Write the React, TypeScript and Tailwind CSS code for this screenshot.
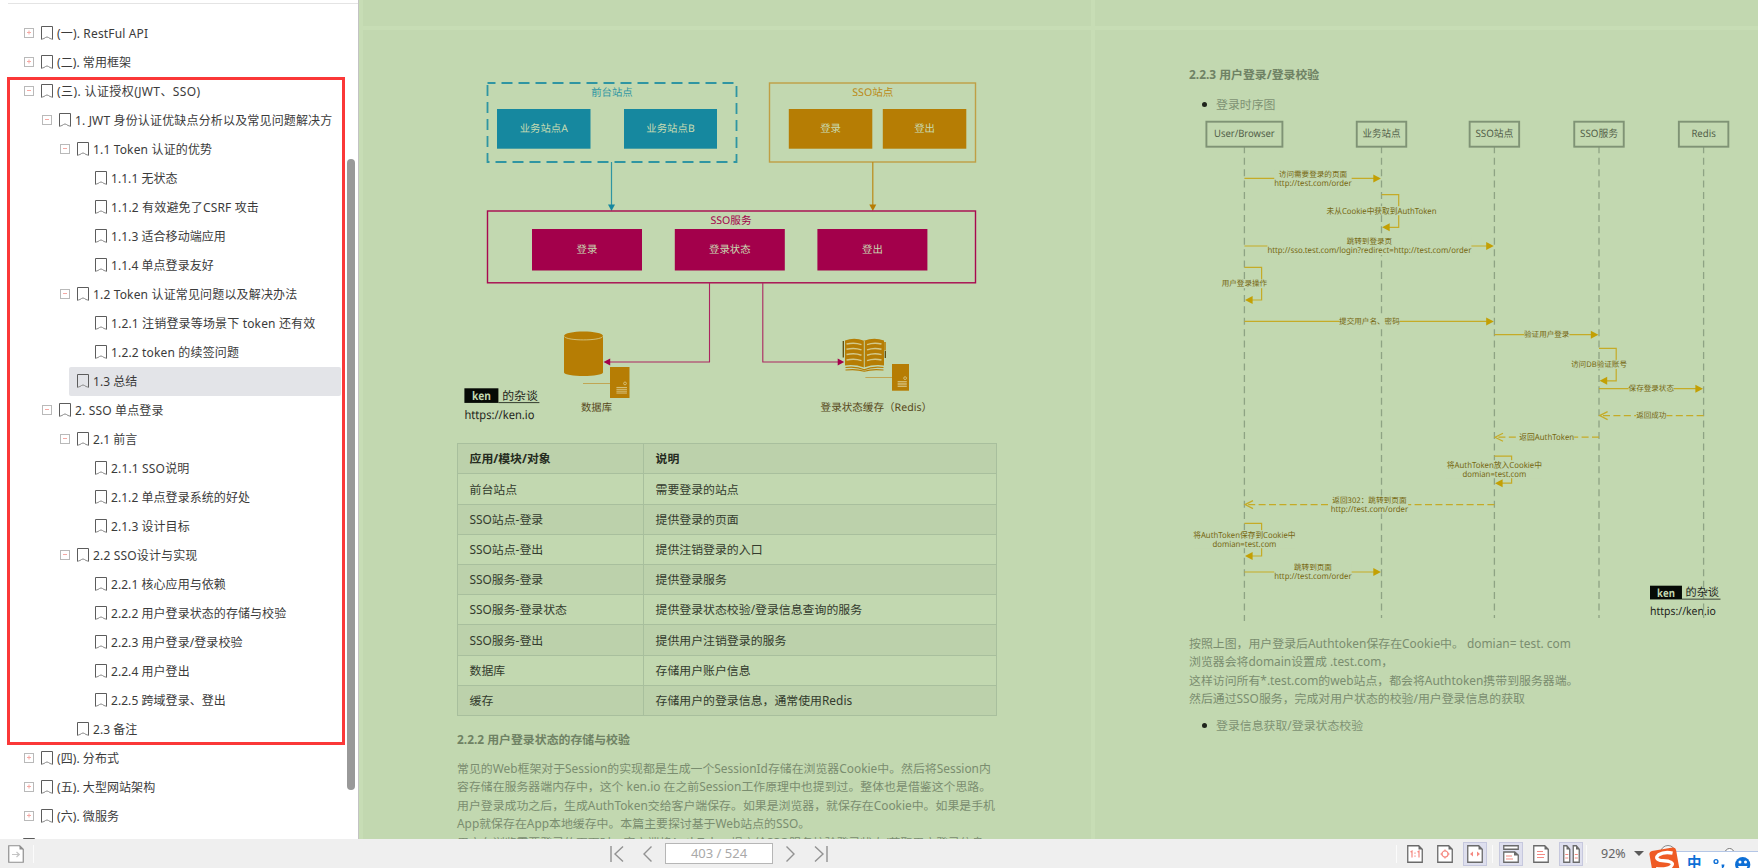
import { Fragment } from 'react'
import type { ReactNode } from 'react'

const PAPER = '#c2d8b0'
const TEAL = '#16889f'
const GOLD = '#b67d04'
const WINE = '#a3004b'
const MSG = '#c3a004'

type Node = { level: number; text: string; state?: '+' | '-'; selected?: boolean }

const outline: Node[] = [
  { level: 0, text: '(一). RestFul API', state: '+' },
  { level: 0, text: '(二). 常用框架', state: '+' },
  { level: 0, text: '(三). 认证授权(JWT、SSO)', state: '-' },
  { level: 1, text: '1. JWT 身份认证优缺点分析以及常见问题解决方', state: '-' },
  { level: 2, text: '1.1 Token 认证的优势', state: '-' },
  { level: 3, text: '1.1.1 无状态' },
  { level: 3, text: '1.1.2 有效避免了CSRF 攻击' },
  { level: 3, text: '1.1.3 适合移动端应用' },
  { level: 3, text: '1.1.4 单点登录友好' },
  { level: 2, text: '1.2 Token 认证常见问题以及解决办法', state: '-' },
  { level: 3, text: '1.2.1 注销登录等场景下 token 还有效' },
  { level: 3, text: '1.2.2 token 的续签问题' },
  { level: 2, text: '1.3 总结', selected: true },
  { level: 1, text: '2. SSO 单点登录', state: '-' },
  { level: 2, text: '2.1 前言', state: '-' },
  { level: 3, text: '2.1.1 SSO说明' },
  { level: 3, text: '2.1.2 单点登录系统的好处' },
  { level: 3, text: '2.1.3 设计目标' },
  { level: 2, text: '2.2 SSO设计与实现', state: '-' },
  { level: 3, text: '2.2.1 核心应用与依赖' },
  { level: 3, text: '2.2.2 用户登录状态的存储与校验' },
  { level: 3, text: '2.2.3 用户登录/登录校验' },
  { level: 3, text: '2.2.4 用户登出' },
  { level: 3, text: '2.2.5 跨域登录、登出' },
  { level: 2, text: '2.3 备注' },
  { level: 0, text: '(四). 分布式', state: '+' },
  { level: 0, text: '(五). 大型网站架构', state: '+' },
  { level: 0, text: '(六). 微服务', state: '+' },
]

const indent = ['pl-[17px]', 'pl-[35px]', 'pl-[53px]', 'pl-[71px]']

// titles with latin words run slightly wider than the pure chinese ones
function tracking(text: string) {
  if (text.includes('、S')) return 'tracking-[0.4px]'
  return /[A-Za-z]/.test(text) ? 'tracking-[0.16px]' : 'tracking-[0.06px]'
}

const modules = [
  ['应用/模块/对象', '说明'],
  ['前台站点', '需要登录的站点'],
  ['SSO站点-登录', '提供登录的页面'],
  ['SSO站点-登出', '提供注销登录的入口'],
  ['SSO服务-登录', '提供登录服务'],
  ['SSO服务-登录状态', '提供登录状态校验/登录信息查询的服务'],
  ['SSO服务-登出', '提供用户注销登录的服务'],
  ['数据库', '存储用户账户信息'],
  ['缓存', '存储用户的登录信息，通常使用Redis'],
]

function Bookmark() {
  return (
    <svg width="12" height="14" viewBox="0 0 12 14" className="shrink-0" fill="none" stroke="#5c5c5c">
      <path d="M.5 13.5V.5h11v13" />
      <path d="M.5 13.3 Q3.5 12.6 4.5 11.5 Q6 10.4 7.5 11.5 Q8.5 12.6 11.5 13.3" stroke="#8a8a8a" />
    </svg>
  )
}

function Expander({ state }: { state?: '+' | '-' }) {
  if (!state) return <span className="w-[10px] shrink-0" />
  return (
    <svg width="10" height="10" viewBox="0 0 10 10" className="shrink-0" fill="none">
      <rect x=".5" y=".5" width="9" height="9" stroke="#b9b9b9" />
      <path d={state === '+' ? 'M3 4.5h4M5 2.5v4' : 'M3 4.5h4'} stroke="#f5a9a4" />
    </svg>
  )
}

function Sidebar() {
  return (
    <aside className="relative h-full w-[359px] shrink-0 overflow-hidden border-r border-[#c3c3c3] bg-white">
      <div className="mt-[3px] ml-2 h-px bg-[#e4e4e4]" />
      <ul className="mt-[15px] ml-[7px] w-[334px] text-[12px] text-[#3b3b3b]">
        {outline.map((n) => (
          <li key={n.text} className={`relative flex h-[29px] items-center ${indent[n.level]}`}>
            {n.selected && <span className="absolute inset-y-0 right-0 left-[62px] rounded-xs bg-[#e3e4e8]" />}
            <span className="relative flex items-center pb-px">
              <Expander state={n.state} />
              <span className="w-[7px]" />
              <Bookmark />
              <span className={`ml-[4px] pt-[2px] whitespace-nowrap ${tracking(n.text)}`}>{n.text}</span>
            </span>
          </li>
        ))}
        <li className="ml-4 flex pt-[7px]">
          <Bookmark />
        </li>
      </ul>
      {/* hand-drawn highlight over the chapter */}
      <div className="absolute top-[77px] left-[7px] h-[668px] w-[338px] border-3 border-[#fb3838]" />
      <div className="absolute top-[159px] left-[347px] h-[631px] w-2 rounded-full bg-[#999]" />
    </aside>
  )
}

type LabelProps = { x: number; y: number; w?: number; size: number; fill: string; bold?: boolean; children: string }

// text centred on x / y, stretched to w when it is given
function Label({ x, y, w, size, fill, bold, children }: LabelProps) {
  return (
    <text
      x={w ? x - w / 2 : x}
      y={y + size * 0.37}
      textAnchor={w ? 'start' : 'middle'}
      textLength={w}
      lengthAdjust="spacingAndGlyphs"
      textRendering="geometricPrecision"
      fontSize={size}
      fill={fill}
      fontWeight={bold ? 700 : 400}
    >
      {children}
    </text>
  )
}

type BlockProps = { x: number; y: number; w: number; h: number; fill: string; children: string }

function Block({ x, y, w, h, fill, children }: BlockProps) {
  return (
    <g>
      <rect x={x} y={y} width={w} height={h} fill={fill} />
      <Label x={x + w / 2} y={y + h / 2 - 0.4} size={10.4} fill="#c9dcb2">{children}</Label>
    </g>
  )
}

function Signature({ x, y, k }: { x: number; y: number; k: number }) {
  return (
    <g transform={`translate(${x} ${y}) scale(${k})`}>
      <rect width="34" height="14.6" fill="#060a06" />
      <path d="M34 14.3h41" stroke="#232a20" strokeWidth=".9" />
      <Label x={17} y={7.4} w={19} size={11.8} fill={PAPER} bold>ken</Label>
      <Label x={55.6} y={7} w={35.6} size={11.9} fill="#1e241b">的杂谈</Label>
      <Label x={35} y={26.4} w={70} size={12} fill="#1e241b">https://ken.io</Label>
    </g>
  )
}

function Server({ x, y, w, h }: { x: number; y: number; w: number; h: number }) {
  return (
    <g>
      <rect x={x} y={y} width={w} height={h} fill={GOLD} />
      <circle cx={x + w * 0.77} cy={y + h * 0.53} r="1.4" fill="none" stroke="#d9c98a" strokeWidth=".8" />
      {[0.66, 0.72, 0.78, 0.84].map((k) => (
        <path key={k} d={`M${x + w * 0.33} ${y + h * k}h${w * 0.54}`} stroke="#d9c98a" strokeWidth=".9" />
      ))}
    </g>
  )
}

function Architecture() {
  return (
    <svg width="728" height="413" viewBox="363 30 728 413" className="block shrink-0">
      <rect x="487.5" y="83" width="249" height="79" fill="none" stroke="#2f95a2" strokeWidth="1.8" strokeDasharray="11 6" strokeDashoffset="3" />
      <Label x={612} y={92} w={41.5} size={10.4} fill="#2f95a2">前台站点</Label>
      <Block x={497} y={109} w={93.5} h={39.7} fill={TEAL}>业务站点A</Block>
      <Block x={624} y={109} w={93} h={39.7} fill={TEAL}>业务站点B</Block>

      <rect x="769.5" y="83" width="206" height="79" fill="none" stroke="#bf9f45" strokeWidth="1.4" />
      <Label x={872.8} y={92} w={41} size={10.6} fill="#bb8a17">SSO站点</Label>
      <Block x={788.8} y={109} w={83.5} h={39.7} fill={GOLD}>登录</Block>
      <Block x={882.8} y={109} w={83.5} h={39.7} fill={GOLD}>登出</Block>

      <path d="M611.5 162v43" stroke="#2f95a2" strokeWidth="1.2" />
      <path d="M608 204.5h7l-3.5 6.5z" fill={TEAL} />
      <path d="M872.8 162v43" stroke="#bb8a17" strokeWidth="1.2" />
      <path d="M869.3 204.5h7l-3.5 6.5z" fill={GOLD} />

      <rect x="487.5" y="211" width="488" height="71.8" fill="none" stroke="#a8084f" strokeWidth="1.4" />
      <Label x={731} y={220.3} w={41} size={10.6} fill={WINE}>SSO服务</Label>
      <Block x={532} y={229} w={110} h={41.5} fill={WINE}>登录</Block>
      <Block x={674.8} y={229} w={110} h={41.5} fill={WINE}>登录状态</Block>
      <Block x={817.4} y={229} w={110} h={41.5} fill={WINE}>登出</Block>

      <g fill="none" stroke="#ab2560" strokeWidth="1.1">
        <path d="M709.5 283v79H610" />
        <path d="M762.8 283v79H838" />
      </g>
      <path d="M603.5 362l6.7-3.4v6.8zM844.2 362l-6.5-3.4v6.8z" fill={WINE} />

      <path d="M564 336v36.5c0 4.6 39 4.6 39 0V336c0-6-39-6-39 0z" fill={GOLD} />
      <path d="M564.3 336.6c3 4.4 35.4 4.4 38.4 0" fill="none" stroke="#d5cf96" strokeWidth=".8" />
      <path d="M583 383.5h27M865.4 377.5h27" stroke="#bfa04a" strokeWidth=".9" />
      <Server x={610} y={367} w={19.500} h={31} />
      <Server x={892} y={364} w={17} h={26.7} />

      <path d="M843.3 341v16.5M885.3 351v7" stroke="#5d4a0a" strokeWidth="1.3" />
      <path d="M885 342v8.5" stroke={GOLD} strokeWidth="1.6" />
      <path d="M845 340.5q9.5-3.5 19 .3q10-3.8 20-.3v25q-10-1.5-20 2q-9.5-3.500-19-2z" fill={GOLD} />
      <path d="M845.5 367.5q11-1.3 18.7 2.2q8-3.5 19.3-2.2M845.5 370q11-1.3 18.700 1.2q8-2.500 19.300-1.2" fill="none" stroke={GOLD} strokeWidth="1.2" />
      <path d="M864.3 341v27" stroke={PAPER} strokeWidth=".9" />
      {[344, 349.3, 354.6, 360].map((y) => (
        <path
          key={y}
          d={`M846.5 ${y}q8-2 15 .6M867 ${y + 0.6}q7-2.6 14.5-.6`}
          fill="none"
          stroke="#d2c889"
          strokeWidth="1.5"
        />
      ))}

      <Label x={596.5} y={407.3} w={31} size={10.4} fill="#57481a">数据库</Label>
      <Label x={876.3} y={407.3} w={111.5} size={10.6} fill="#57481a">登录状态缓存（Redis）</Label>
      <Signature x={464.4} y={388.3} k={1} />
    </svg>
  )
}

// x of every participant's lifeline
const USER = 1244.4
const SITE = 1381.5
const SSO = 1494.4
const SERVICE = 1599
const REDIS = 1703.6

const actors = [
  { name: 'User/Browser', x: USER, w: 76, tw: 60.7, end: 621 },
  { name: '业务站点', x: SITE, w: 49.5, tw: 38, end: 618 },
  { name: 'SSO站点', x: SSO, w: 49.5, tw: 38, end: 618 },
  { name: 'SSO服务', x: SERVICE, w: 49.5, tw: 38, end: 618 },
  { name: 'Redis', x: REDIS, w: 49.5, tw: 24.4, end: 618 },
]

type Line = [text: string, width: number]
type Message = { from: number; to: number; y: number; lines: Line[]; reply?: boolean; h?: number; ty?: number }

const messages: Message[] = [
  { from: USER, to: SITE, y: 178.4, lines: [['访问需要登录的页面', 68.2], ['http://test.com/order', 77.4]] },
  { from: SITE, to: SITE, y: 194.7, h: 32.6, ty: 210.7, lines: [['未从Cookie中获取到AuthToken', 110]] },
  { from: USER, to: SSO, y: 246, lines: [['跳转到登录页', 45.4], ['http://sso.test.com/login?redirect=http://test.com/order', 204]] },
  { from: USER, to: USER, y: 267.4, h: 32.6, ty: 283.7, lines: [['用户登录操作', 45.4]] },
  { from: USER, to: SSO, y: 321.4, lines: [['提交用户名、密码', 60.7]] },
  { from: SSO, to: SERVICE, y: 334.7, lines: [['验证用户登录', 45.4]] },
  { from: SERVICE, to: SERVICE, y: 348.4, h: 32.4, ty: 364.4, lines: [['访问DB验证账号', 56]] },
  { from: SERVICE, to: REDIS, y: 388.7, lines: [['保存登录状态', 45.4]] },
  { from: REDIS, to: SERVICE, y: 415.6, reply: true, lines: [['返回成功', 30.3]] },
  { from: SERVICE, to: SSO, y: 437.2, reply: true, lines: [['返回AuthToken', 55]] },
  { from: SSO, to: SSO, y: 456.2, h: 27, ty: 469.2, lines: [['将AuthToken放入Cookie中', 95.3], ['domian=test.com', 63.8]] },
  { from: SSO, to: USER, y: 504.6, reply: true, lines: [['返回302：跳转到页面', 74.3], ['http://test.com/order', 77.4]] },
  { from: USER, to: USER, y: 523.4, h: 32.6, ty: 539.2, lines: [['将AuthToken保存到Cookie中', 102.4], ['domian=test.com', 64]] },
  { from: USER, to: SITE, y: 572, lines: [['跳转到页面', 37.9], ['http://test.com/order', 77.4]] },
]

function MessageArrow({ m }: { m: Message }) {
  const self = m.from === m.to
  const cx = (m.from + m.to) / 2
  const cy = m.ty ?? m.y
  const tipY = self ? m.y + (m.h ?? 0) : m.y
  const dir = self || m.to < m.from ? -1 : 1
  const tip = m.to - dir * 0.6
  const wide = Math.max(...m.lines.map((l) => l[1]))
  const tall = m.lines.length * 9
  return (
    <g>
      <path
        d={self ? `M${m.from} ${m.y}h17.2v${m.h}h-12` : `M${m.from} ${m.y}H${m.to - dir * 3}`}
        fill="none"
        stroke="#c5ab27"
        strokeWidth="1.2"
        strokeDasharray={m.reply ? '7 3.4' : undefined}
      />
      {m.reply ? (
        <path d={`M${tip - dir * 8} ${tipY - 4}L${tip} ${tipY}l${-dir * 8} 4`} fill="none" stroke="#c5ab27" strokeWidth="1.2" />
      ) : (
        <path d={`M${tip} ${tipY}l${-dir * 7.6} -4v8z`} fill={MSG} />
      )}
      <rect x={cx - wide / 2} y={cy - tall / 2} width={wide} height={tall} fill={PAPER} />
      {m.lines.map(([text, w], i) => (
        <Label
          key={text}
          x={cx}
          y={cy + (i - (m.lines.length - 1) / 2) * 9 - 0.2}
          w={w}
          size={/[a-z]/.test(text) ? 8.4 : 7.8}
          fill="#766710"
        >
          {text}
        </Label>
      ))}
    </g>
  )
}

function Sequence() {
  return (
    <svg width="663" height="512" viewBox="1095 116 663 512" className="block shrink-0">
      {actors.map((a) => (
        <Fragment key={a.name}>
          <path d={`M${a.x} 147V${a.end}`} stroke="#8ea384" strokeWidth="1.3" strokeDasharray="7 4.43" strokeDashoffset=".7" />
          <rect x={a.x - a.w / 2} y="121.7" width={a.w} height="25" fill="none" stroke="#7f9375" strokeWidth="1.9" />
          <Label x={a.x} y={133.700} w={a.tw} size={10.2} fill="#525f49">{a.name}</Label>
        </Fragment>
      ))}
      {messages.map((m, i) => (
        <MessageArrow key={i} m={m} />
      ))}
      <Signature x={1650} y={585.7} k={0.94} />
    </svg>
  )
}

function Bullet({ children }: { children: string }) {
  return (
    <div className="flex h-[18px] items-center pl-[107px] text-[#7e9273]">
      <span className="mr-[9px] h-[5px] w-[5px] rounded-full bg-[#1f241c]" />
      <span className="pt-px">{children}</span>
    </div>
  )
}

function LeftPage() {
  return (
    <div className="flex min-h-0 flex-1 flex-col overflow-hidden bg-[#c2d8b0]">
      <Architecture />
      <div className="ml-[94px] grid w-[540px] shrink-0 grid-cols-[186px_1fr] border-t border-l border-[#a8bf9d]">
        {modules.map(([name, text], i) => {
          const cell = `flex items-center border-r border-b border-[#a8bf9d] px-[11.5px] pt-px ${
            i === 1 || i === 6 ? 'h-[31px]' : 'h-[30px]'
          } ${i % 2 ? '' : 'bg-[#bcd1ab]'} ${i ? 'text-[#333b2d]' : 'font-bold text-[#252b20]'}`
          return (
            <Fragment key={name}>
              <div className={cell}>{name}</div>
              <div className={cell}>{text}</div>
            </Fragment>
          )
        })}
      </div>
      <h3 className="mt-[14px] ml-[94px] shrink-0 leading-[18px] font-bold text-[#6f8264]">2.2.2 用户登录状态的存储与校验</h3>
      <div className="mt-[11px] ml-[94px] leading-[18.4px] whitespace-nowrap text-[#7a8d6f]">
        <p>常见的Web框架对于Session的实现都是生成一个SessionId存储在浏览器Cookie中。然后将Session内</p>
        <p>容存储在服务器端内存中，这个 ken.io 在之前Session工作原理中也提到过。整体也是借鉴这个思路。</p>
        <p>用户登录成功之后，生成AuthToken交给客户端保存。如果是浏览器，就保存在Cookie中。如果是手机</p>
        <p>App就保存在App本地缓存中。本篇主要探讨基于Web站点的SSO。</p>
        <p>用户在浏览需要登录的页面时，客户端将AuthToken提交给SSO服务校验登录状态/获取用户登录信息，</p>
      </div>
    </div>
  )
}

function RightPage() {
  return (
    <div className="flex min-h-0 flex-1 flex-col overflow-hidden bg-[#c2d8b0]">
      <h3 className="mt-[35px] ml-[94px] leading-[18px] font-bold text-[#6f8264]">2.2.3 用户登录/登录校验</h3>
      <div className="mt-[12px]">
        <Bullet>登录时序图</Bullet>
      </div>
      <div className="mt-[3px]">
        <Sequence />
      </div>
      <div className="mt-[6px] ml-[94px] leading-[18.4px] whitespace-nowrap text-[#7a8d6f]">
        <p>按照上图，用户登录后Authtoken保存在Cookie中。 domian= test. com</p>
        <p>浏览器会将domain设置成 .test.com，</p>
        <p>这样访问所有*.test.com的web站点，都会将Authtoken携带到服务器端。</p>
        <p>然后通过SSO服务，完成对用户状态的校验/用户登录信息的获取</p>
      </div>
      <div className="mt-[9px]">
        <Bullet>登录信息获取/登录状态校验</Bullet>
      </div>
    </div>
  )
}

function DocIcon({ children }: { children?: ReactNode }) {
  return (
    <svg width="16" height="18" viewBox="0 0 16 18" fill="none">
      <path d="M.75 .75h11l3.5 3.5v13H.75z" fill="#fff" stroke="#6a6a6a" strokeWidth="1.3" />
      <path d="M11.5 .5v4h4z" fill="#6a6a6a" />
      <g stroke="#f58a82" strokeWidth="1.2">{children}</g>
    </svg>
  )
}

function ToolButton({ active, children }: { active?: boolean; children: ReactNode }) {
  return (
    <span
      className={`flex h-6 w-6 items-center justify-center border ${
        active ? 'border-[#c6c8de] bg-[#dedfee]' : 'border-transparent'
      }`}
    >
      {children}
    </span>
  )
}

function Divider() {
  return <span className="block h-[18px] w-px bg-[#fbfbfb]" />
}

function InputMethod() {
  return (
    <svg width="110" height="24" viewBox="1648 844 110 24" className="absolute right-0 bottom-0">
      <circle cx="1668" cy="853" r="7.5" fill="#f6f6f6" stroke="#8a8a8a" />
      <circle cx="1729.5" cy="853" r="4.5" fill="#fff" stroke="#777" />
      <path d="M1672 851.5h86V868h-86z" fill="#fff" />
      <path d="M1676 851.5h82" stroke="#b4c6e6" />
      <g transform="rotate(-10 1665 862)">
        <rect x="1651" y="849" width="27" height="26" rx="3" fill="#ef5b25" />
        <path
          d="M1674 854.5q-8-3.2-14-.7q-5 3 .5 5.7l8 2.4q6 2.6 1.5 5.6q-5 2.5-15-.5"
          fill="none"
          stroke="#fff"
          strokeWidth="3.4"
        />
      </g>
      <text x="1687" y="868" fontSize="14.5" fontWeight="700" fill="#0d6fd6">中</text>
      <circle cx="1716" cy="861.5" r="1.9" fill="none" stroke="#0d6fd6" strokeWidth="1.4" />
      <path d="M1721.5 864.5h3q0 3-2.5 4z" fill="#0d6fd6" />
      <circle cx="1742.7" cy="864.5" r="7.6" fill="#0d6fd6" />
      <circle cx="1740" cy="862" r="1.5" fill="#fff" />
      <circle cx="1745.5" cy="862" r="1.5" fill="#fff" />
      <path d="M1738 866h9.5q-1 4-4.7 4t-4.8-4z" fill="#fff" />
    </svg>
  )
}

function StatusBar() {
  return (
    <footer className="relative flex h-[29px] shrink-0 items-center bg-[#efefef]">
      <div className="flex w-[610px] items-center gap-[9px] pl-2">
        <svg width="16" height="18" viewBox="0 0 16 18" fill="none">
          <path d="M.75 .75h11l3.5 3.5v13H.75z" fill="#fff" stroke="#8e8e8e" strokeWidth="1.2" />
          <path d="M11.5 .5v4h4z" fill="#8e8e8e" />
          <path d="M4 9.5h7M8.5 7l2.8 2.5L8.5 12" stroke="#c4c4c4" strokeWidth="1.2" />
        </svg>
        <Divider />
      </div>
      <div className="flex items-center">
        <svg width="14" height="16" viewBox="0 0 14 16" fill="none" stroke="#929292" strokeWidth="1.4">
          <path d="M1 0v16M13 .5L5 8l8 7.5" />
        </svg>
        <svg width="9" height="16" viewBox="0 0 9 16" className="ml-[19px]" fill="none" stroke="#929292" strokeWidth="1.4">
          <path d="M8.5 .5L1 8l7.5 7.5" />
        </svg>
        <span className="ml-[13px] flex h-[21px] w-[108px] items-center justify-center border border-[#b6b6b6] bg-white text-[13px] text-[#a9a9a9]">
          403 / 524
        </span>
        <svg width="9" height="16" viewBox="0 0 9 16" className="ml-[13px]" fill="none" stroke="#929292" strokeWidth="1.4">
          <path d="M.5 .5L8 8 .5 15.5" />
        </svg>
        <svg width="14" height="16" viewBox="0 0 14 16" className="ml-[19px]" fill="none" stroke="#929292" strokeWidth="1.4">
          <path d="M13 0v16M1 .5L9 8l-8 7.5" />
        </svg>
      </div>
      <div className="ml-auto flex w-[362px] items-center">
        <Divider />
        <div className="ml-[6px] flex gap-[6px]">
          <ToolButton>
            <DocIcon>
              <path d="M3.5 7L5 6v6.5M10.5 7L12 6v6.5M8 7.5v1.3M8 10.5v1.3" />
            </DocIcon>
          </ToolButton>
          <ToolButton>
            <DocIcon>
              <circle cx="8" cy="9" r="3" />
              <path d="M8 4.2l1.6 1.6H6.4zM8 13.8l1.6-1.6H6.4zM3.2 9l1.6-1.6v3.2zM12.8 9l-1.6-1.6v3.2z" fill="#f58a82" stroke="none" />
            </DocIcon>
          </ToolButton>
          <ToolButton active>
            <DocIcon>
              <path d="M3 9l3-2.6v5.2zM13 9l-3-2.6v5.2z" fill="#f58a82" stroke="none" />
            </DocIcon>
          </ToolButton>
        </div>
        <span className="ml-[5px]">
          <Divider />
        </span>
        <div className="ml-[6px] flex gap-[6px]">
          <ToolButton active>
            <svg width="16" height="18" viewBox="0 0 16 18" fill="none">
              <path d="M.75 .75h14.5v3.5H.75zM.75 7h11l3.5 3v7.25H.75z" fill="#fff" stroke="#6a6a6a" strokeWidth="1.3" />
              <path d="M11 6.5v4h4.5z" fill="#6a6a6a" />
              <path d="M3 11h6M3 14h7" stroke="#f58a82" strokeWidth="1.2" />
            </svg>
          </ToolButton>
          <ToolButton>
            <DocIcon>
              <path d="M4 6.5h6M4 9.5h8M4 12.5h7" />
            </DocIcon>
          </ToolButton>
          <ToolButton active>
            <svg width="17" height="18" viewBox="0 0 17 18" fill="none">
              <path d="M.75 .75h3l3 3.5v13h-6zM10.25 .75h3l3 3.5v13h-6z" fill="#fff" stroke="#6a6a6a" strokeWidth="1.3" />
              <path d="M3.5 .5v4h3.3zM13 .5v4h3.3z" fill="#6a6a6a" />
              <path d="M2.3 9.5h3M2.3 13h3M11.8 9.5h3M11.8 13h3" stroke="#f58a82" strokeWidth="1.2" />
            </svg>
          </ToolButton>
        </div>
        <span className="ml-[3px]">
          <Divider />
        </span>
        <span className="ml-[14px] w-[33px] pt-[2px] text-[12.5px] text-[#646464]">92%</span>
        <span className="h-0 w-0 border-x-5 border-t-5 border-x-transparent border-t-[#5a5a5a]" />
      </div>
      <InputMethod />
    </footer>
  )
}

export default function App() {
  return (
    <div className="flex h-[868px] w-[1758px] flex-col overflow-hidden bg-white font-['Noto_Sans','Noto_Sans_CJK_SC',sans-serif] text-[12px]">
      <div className="flex h-[839px] shrink-0">
        <Sidebar />
        <main className="flex min-w-0 flex-1 gap-1 overflow-hidden bg-[#c7ddb5] pl-1 text-[11.9px]">
          <section className="flex w-[728px] shrink-0 flex-col gap-1">
            <div className="h-[26px] shrink-0 bg-[#c2d8b0]" />
            <LeftPage />
          </section>
          <section className="flex min-w-0 flex-1 flex-col gap-1">
            <div className="h-[26px] shrink-0 bg-[#c2d8b0]" />
            <RightPage />
          </section>
        </main>
      </div>
      <StatusBar />
    </div>
  )
}
